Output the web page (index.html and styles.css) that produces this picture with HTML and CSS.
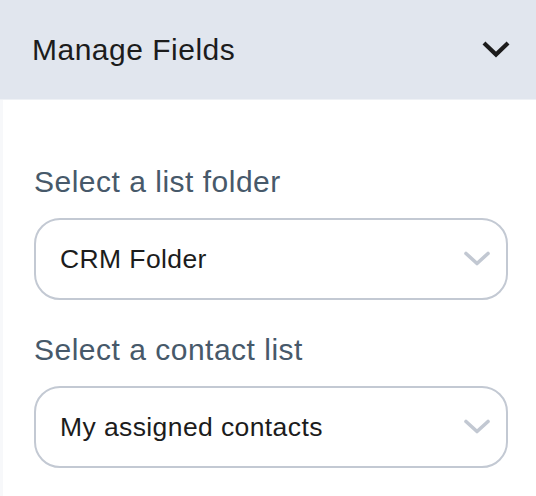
FILE: index.html
```html
<!DOCTYPE html>
<html>
<head>
<meta charset="utf-8">
<link rel="stylesheet" href="styles.css">
</head>
<body>
<div class="panel">
  <div class="panel-header">
    <span class="panel-title">Manage Fields</span>
    <svg class="header-chevron" width="28" height="18" viewBox="0 0 28 18"><path d="M3.5 3.5 L14 13.5 L24.5 3.5" fill="none" stroke="#1c1c1c" stroke-width="4.2" stroke-linecap="square"/></svg>
  </div>
  <div class="panel-body">
    <div class="field">
      <div class="field-label">Select a list folder</div>
      <div class="select">
        <span class="select-value">CRM Folder</span>
        <svg class="select-chevron" width="28" height="16" viewBox="0 0 28 16"><path d="M3 2.5 L14 12.5 L25 2.5" fill="none" stroke="#c2c8d2" stroke-width="3.6" stroke-linecap="round" stroke-linejoin="round"/></svg>
      </div>
    </div>
    <div class="field">
      <div class="field-label">Select a contact list</div>
      <div class="select">
        <span class="select-value">My assigned contacts</span>
        <svg class="select-chevron" width="28" height="16" viewBox="0 0 28 16"><path d="M3 2.5 L14 12.5 L25 2.5" fill="none" stroke="#c2c8d2" stroke-width="3.6" stroke-linecap="round" stroke-linejoin="round"/></svg>
      </div>
    </div>
  </div>
</div>
</body>
</html>
```
FILE: styles.css
```css
html, body {
  margin: 0;
  padding: 0;
  background: #ffffff;
}
body {
  font-family: "Liberation Sans", Arial, Helvetica, sans-serif;
  width: 536px;
  height: 496px;
  overflow: hidden;
}
.panel {
  border-left: 3px solid #f7f8fa;
  min-height: 496px;
  box-sizing: border-box;
}
.panel-header {
  height: 99px;
  background: #e1e6ee;
  display: flex;
  align-items: center;
  justify-content: space-between;
  margin-left: -3px;
  padding: 0 26px 0 32px;
  border-bottom: 1px solid #eef1f5;
}
.panel-title {
  font-size: 30px;
  color: #1c1c1c;
  letter-spacing: 0.5px;
  margin-top: 0;
}
.header-chevron {
  display: block;
  margin-top: 0;
}
.panel-body {
  padding: 66px 28px 0 31px;
  display: flex;
  flex-direction: column;
  gap: 34px;
}
.field {
  display: flex;
  flex-direction: column;
  gap: 20px;
}
.field-label {
  font-size: 30px;
  line-height: 32px;
  color: #47596a;
  letter-spacing: 0.5px;
}
.select {
  box-sizing: border-box;
  height: 82px;
  border: 2px solid #c3c9d3;
  border-radius: 26px;
  display: flex;
  align-items: center;
  justify-content: space-between;
  padding: 0 15px 0 24px;
}
.select-value {
  font-size: 26.5px;
  color: #1c1c1c;
  letter-spacing: 0.4px;
}
.select-chevron {
  display: block;
}
```
